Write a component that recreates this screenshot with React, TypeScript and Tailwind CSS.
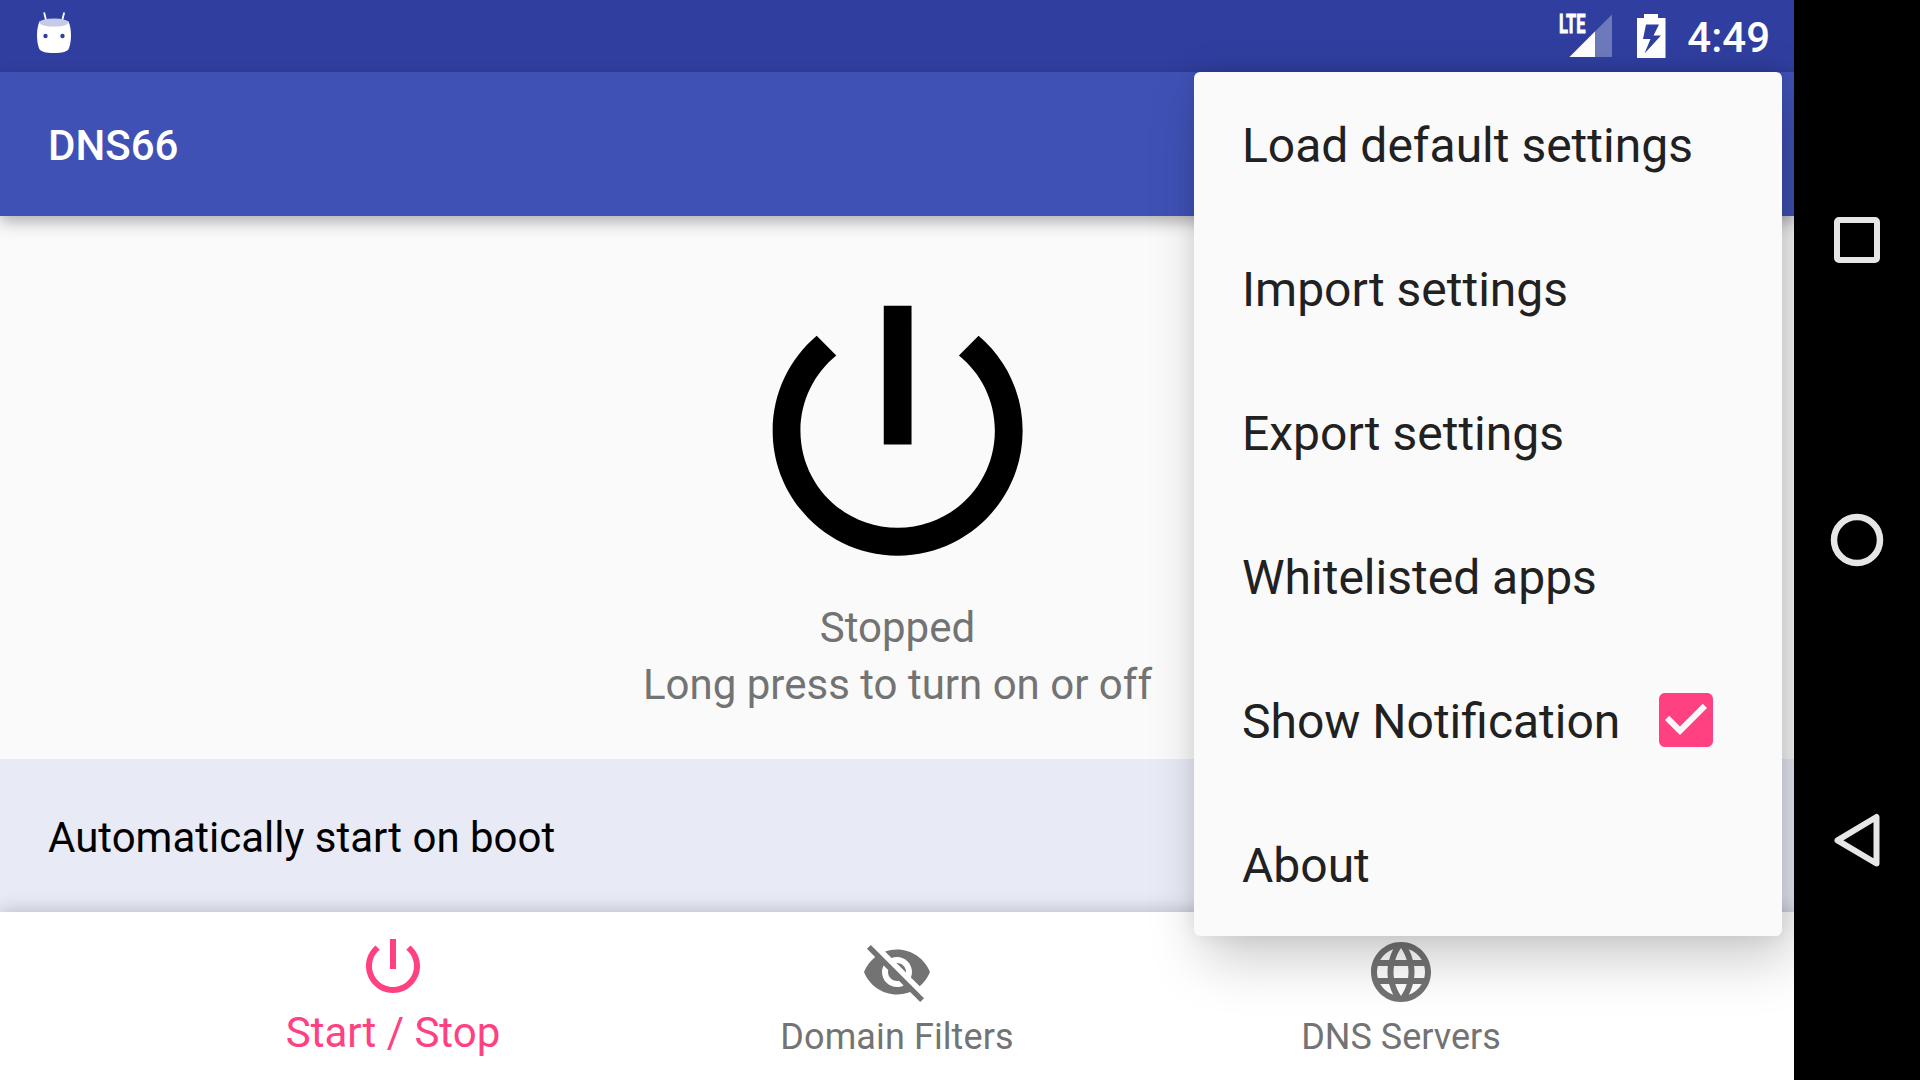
import React from "react";

const POWER_RING =
  "M17.83 5.17l-1.42 1.42C17.99 7.86 19 9.81 19 12c0 3.87-3.13 7-7 7s-7-3.13-7-7c0-2.19 1.01-4.14 2.58-5.42L6.17 5.17C4.23 6.82 3 9.26 3 12c0 4.97 4.03 9 9 9s9-4.03 9-9c0-2.74-1.23-5.18-3.17-6.83z";

function PowerIcon({ className }: { className: string }) {
  return (
    <svg viewBox="0 0 24 24" fill="currentColor" className={className}>
      <path d={"M13 3h-2v10h2V3z" + POWER_RING} />
    </svg>
  );
}

function HiddenIcon() {
  return (
    <svg viewBox="0 0 24 24" fill="currentColor" className="size-18">
      <path d="M12 7c2.76 0 5 2.24 5 5 0 .65-.13 1.26-.36 1.83l2.92 2.92c1.51-1.26 2.7-2.89 3.43-4.75-1.73-4.39-6-7.5-11-7.5-1.4 0-2.74.25-3.98.7l2.16 2.16C10.74 7.13 11.35 7 12 7zM2 4.27l2.28 2.28.46.46C3.08 8.3 1.78 10.02 1 12c1.73 4.39 6 7.5 11 7.5 1.55 0 3.03-.3 4.38-.84l.42.42L19.73 22 21 20.73 3.27 3 2 4.27zM7.53 9.8l1.55 1.55c-.05.21-.08.43-.08.65 0 1.66 1.34 3 3 3 .22 0 .44-.03.65-.08l1.55 1.55c-.67.33-1.41.53-2.2.53-2.76 0-5-2.24-5-5 0-.79.2-1.53.53-2.2zm4.31-.78l3.15 3.15.02-.16c0-1.66-1.34-3-3-3l-.17.01z" />
    </svg>
  );
}

function GlobeIcon() {
  return (
    <svg viewBox="0 0 24 24" fill="currentColor" className="size-18">
      <path d="M11.99 2C6.47 2 2 6.48 2 12s4.47 10 9.99 10C17.52 22 22 17.52 22 12S17.52 2 11.99 2zm6.93 6h-2.95c-.32-1.25-.78-2.45-1.38-3.56 1.84.63 3.37 1.91 4.33 3.56zM12 4.04c.83 1.2 1.48 2.53 1.91 3.96h-3.82c.43-1.43 1.08-2.76 1.91-3.96zM4.26 14C4.1 13.36 4 12.69 4 12s.1-1.36.26-2h3.38c-.08.66-.14 1.32-.14 2s.06 1.34.14 2H4.26zm.82 2h2.95c.32 1.25.78 2.45 1.38 3.56-1.84-.63-3.37-1.9-4.33-3.56zm2.95-8H5.08c.96-1.66 2.49-2.93 4.33-3.56C8.81 5.55 8.35 6.75 8.03 8zM12 19.96c-.83-1.2-1.48-2.53-1.91-3.96h3.82c-.43 1.43-1.08 2.76-1.91 3.96zM14.34 14H9.66c-.09-.66-.16-1.32-.16-2s.07-1.35.16-2h4.68c.09.65.16 1.32.16 2s-.07 1.34-.16 2zm.25 5.56c.6-1.11 1.06-2.31 1.38-3.56h2.95c-.96 1.65-2.49 2.93-4.33 3.56zM16.36 14c.08-.66.14-1.32.14-2s-.06-1.34-.14-2h3.38c.16.64.26 1.31.26 2s-.1 1.36-.26 2h-3.38z" />
    </svg>
  );
}

function CheckedBox() {
  return (
    <svg viewBox="0 0 24 24" fill="currentColor" className="size-18 text-[#ff4081]">
      <path d="M19 3H5c-1.1 0-2 .9-2 2v14c0 1.1.9 2 2 2h14c1.1 0 2-.9 2-2V5c0-1.1-.89-2-2-2zm-9 14l-5-5 1.41-1.41L10 14.17l7.59-7.59L19 8l-9 9z" />
    </svg>
  );
}

function RobotIcon() {
  return (
    <svg viewBox="0 0 36 44" className="h-11 w-9">
      <path d="M8.3 2.2l2 8M28 2.2l-2 8" stroke="#fff" strokeWidth="1.8" strokeLinecap="round" />
      <path
        d="M3.4 10.5C1.8 15 1 19 1 24c0 5 .6 9.500 2 13.200C4.200 40.500 10 42 18 42s13.800-1.500 15-4.800C34.400 33.500 35 29 35 24c0-5-.8-9-2.400-13.500z"
        fill="#fff"
      />
      <ellipse cx="18" cy="11.600" rx="14.500" ry="4" fill="#c5cae9" />
      <circle cx="9.500" cy="25" r="2.200" fill="#303f9f" />
      <circle cx="26.500" cy="25" r="2.200" fill="#303f9f" />
    </svg>
  );
}

function StatusBar() {
  return (
    <header className="flex h-18 items-start bg-[#303f9f] text-white">
      <div className="pt-[11px] pl-9">
        <RobotIcon />
      </div>
      <div className="ml-auto flex items-start pr-6">
        <svg viewBox="0 0 56 60" className="h-[60px] w-14">
          <text
            x="1"
            y="33.300"
            fill="#fff"
            stroke="#fff"
            strokeWidth=".9"
            fontFamily="Roboto, sans-serif"
            fontSize="25.500"
            fontWeight="700"
            textLength="26.500"
            lengthAdjust="spacingAndGlyphs"
          >
            LTE
          </text>
          <path d="M54 14.500V57H11.500z" fill="#fff" fillOpacity=".3" />
          <path d="M37 31.500V57H11.500z" fill="#fff" />
        </svg>
        <svg viewBox="0 0 30 60" className="ml-[22px] h-[60px] w-[30px]">
          <path
            fillRule="evenodd"
            fill="#fff"
            d="M8 14h14v4h7.500v40H1V18h7zM10 24.500L7 39h7.500L8.500 53.500 25 35.500h-7.500L23 24.500z"
          />
        </svg>
        <span className="ml-[21px] pt-[13px] text-[42px] leading-[49px] font-medium">4:49</span>
      </div>
    </header>
  );
}

function MenuItem({ label, children }: { label: string; children?: React.ReactNode }) {
  return (
    <li className="flex h-36 items-center justify-between pr-[60px] pl-12">
      <span className="pt-[3px] text-[48px] leading-[56px] whitespace-nowrap">{label}</span>
      {children}
    </li>
  );
}

function OverflowMenu() {
  return (
    <ul className="absolute top-18 right-3 w-[588px] rounded-md bg-[#fafafa] text-[#212121] shadow-[10px_22px_56px_rgba(0,0,0,0.21),0_0_20px_rgba(0,0,0,0.08)]">
      <MenuItem label="Load default settings" />
      <MenuItem label="Import settings" />
      <MenuItem label="Export settings" />
      <MenuItem label="Whitelisted apps" />
      <MenuItem label="Show Notification">
        <CheckedBox />
      </MenuItem>
      <MenuItem label="About" />
    </ul>
  );
}

function BottomTabs() {
  return (
    <nav className="relative flex h-42 justify-center bg-white text-[#737373] shadow-[0_0_18px_rgba(0,0,0,0.24)]">
      <div className="flex w-[504px] flex-col items-center pt-[18px] text-[#ff4081]">
        <PowerIcon className="size-18" />
        <span className="mt-[6px] text-[42px] leading-[49px]">Start / Stop</span>
      </div>
      <div className="flex w-[504px] flex-col items-center pt-6">
        <HiddenIcon />
        <span className="mt-[8px] text-[36px] leading-[42px] tracking-[0.1px]">Domain Filters</span>
      </div>
      <div className="flex w-[504px] flex-col items-center pt-6">
        <GlobeIcon />
        <span className="mt-[8px] text-[36px] leading-[42px]">DNS Servers</span>
      </div>
    </nav>
  );
}

function SystemNav() {
  return (
    <aside className="relative flex w-[126px] flex-col items-center bg-black pt-[210px]">
      <svg viewBox="0 0 60 60" className="size-15" fill="none" stroke="#e6e6e6" strokeWidth="6">
        <rect x="10" y="10" width="40" height="40" rx="2" />
      </svg>
      <svg viewBox="0 0 60 60" className="mt-60 size-15" fill="none" stroke="#e6e6e6" strokeWidth="6.500">
        <circle cx="30" cy="30" r="23" />
      </svg>
      <svg
        viewBox="0 0 60 60"
        className="mt-60 size-15"
        fill="none"
        stroke="#e6e6e6"
        strokeWidth="6"
        strokeLinejoin="round"
      >
        <path d="M10.500 30.300L49.500 7v46.500z" />
      </svg>
    </aside>
  );
}

export default function App() {
  return (
    <div className="flex h-[1080px] w-[1920px] overflow-hidden font-['Roboto',sans-serif]">
      <div className="relative flex w-[1794px] flex-col overflow-hidden bg-[#fafafa]">
        <StatusBar />
        <div className="relative flex h-36 items-center bg-[#3f51b5] pl-12 text-white shadow-[0_6px_15px_rgba(0,0,0,0.3)]">
          <h1 className="pt-[2px] text-[42px] leading-[49px] font-medium">DNS66</h1>
        </div>
        <main className="flex flex-1 flex-col">
          <section className="flex h-[543px] flex-col items-center pt-12 pl-px text-[#737373]">
            <PowerIcon className="size-[333.3px] text-black" />
            <p className="mt-[2px] text-center text-[42px] leading-[57px]">
              Stopped
              <br />
              Long press to turn on or off
            </p>
          </section>
          <section className="flex flex-1 items-center bg-[#e8eaf6] pt-1 pl-12 text-[42px] leading-[49px] text-black">
            Automatically start on boot
          </section>
        </main>
        <BottomTabs />
        <OverflowMenu />
      </div>
      <SystemNav />
    </div>
  );
}
